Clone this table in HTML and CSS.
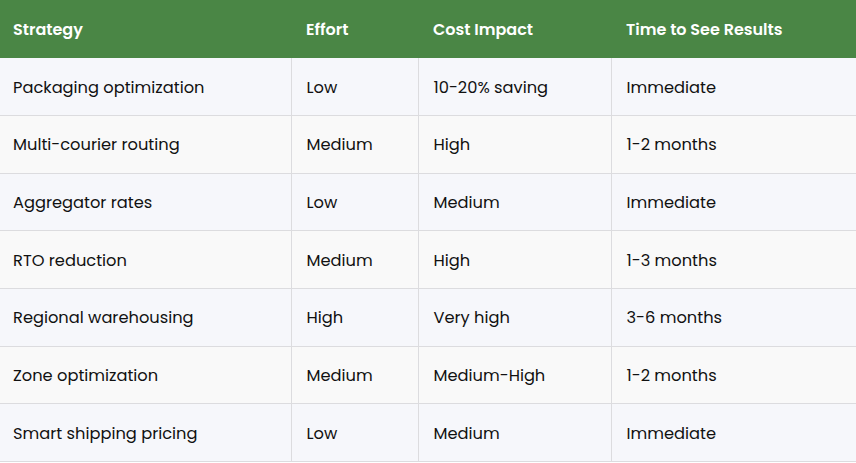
FILE: index.html
```html
<!DOCTYPE html>
<html>
<head>
<meta charset="utf-8">
<link rel="stylesheet" href="styles.css">
</head>
<body>
<table class="grid">
  <colgroup>
    <col class="c1"><col class="c2"><col class="c3"><col class="c4">
  </colgroup>
  <thead>
    <tr><th>Strategy</th><th>Effort</th><th>Cost Impact</th><th>Time to See Results</th></tr>
  </thead>
  <tbody>
    <tr><td>Packaging optimization</td><td>Low</td><td>10-20% saving</td><td>Immediate</td></tr>
    <tr><td>Multi-courier routing</td><td>Medium</td><td>High</td><td>1-2 months</td></tr>
    <tr><td>Aggregator rates</td><td>Low</td><td>Medium</td><td>Immediate</td></tr>
    <tr><td>RTO reduction</td><td>Medium</td><td>High</td><td>1-3 months</td></tr>
    <tr><td>Regional warehousing</td><td>High</td><td>Very high</td><td>3-6 months</td></tr>
    <tr><td>Zone optimization</td><td>Medium</td><td>Medium-High</td><td>1-2 months</td></tr>
    <tr><td>Smart shipping pricing</td><td>Low</td><td>Medium</td><td>Immediate</td></tr>
  </tbody>
</table>
</body>
</html>
```
FILE: styles.css
```css
html, body {
  margin: 0;
  padding: 0;
  background: #ffffff;
}
body {
  font-family: "Poppins", "Open Sans", "Noto Sans", sans-serif;
  color: #111111;
}
.grid {
  width: 856px;
  border-collapse: collapse;
  table-layout: fixed;
}
.c1 { width: 291px; }
.c2 { width: 127px; }
.c3 { width: 193px; }
.c4 { width: 245px; }
.grid th {
  background: #4a8645;
  color: #ffffff;
  font-weight: 600;
  font-size: 16px;
  text-align: left;
  height: 58px;
  padding: 0 15px;
  box-sizing: border-box;
  border: none;
}
.grid td {
  font-size: 16.25px;
  height: 57.67px;
  padding: 1px 15px 0;
  box-sizing: border-box;
  border: 1px solid #dcdcdf;
  border-top: none;
}
.grid th:first-child,
.grid td:first-child { padding-left: 13px; }
.grid td:first-child { border-left: none; }
.grid td:last-child { border-right: none; }
.grid tbody tr:nth-child(odd) td { background: #f6f7fb; }
.grid tbody tr:nth-child(even) td { background: #f9f9f9; }
```
